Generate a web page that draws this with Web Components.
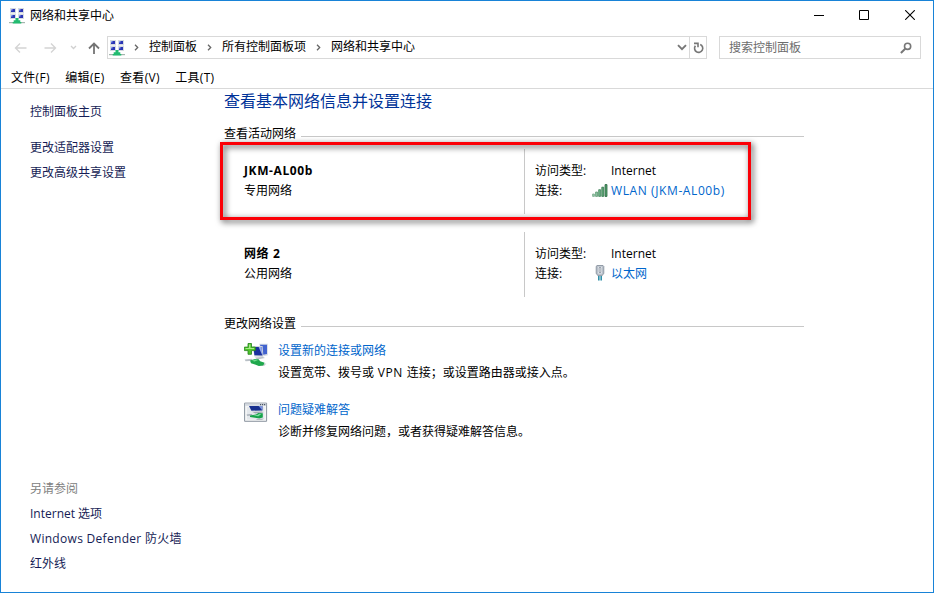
<!DOCTYPE html>
<html lang="zh-CN">
<head>
<meta charset="utf-8">
<title>网络和共享中心</title>
<style>
  body {
    margin: 0;
    font: 12px/20px "Open Sans", "Noto Sans CJK SC", sans-serif;
    color: #000;
    background: #fff;
  }
  .wide { letter-spacing: .3px; }
</style>
</head>
<body>
<app-window>
  <title-bar>网络和共享中心</title-bar>
  <nav-bar search="搜索控制面板">
    <path-part>控制面板</path-part>
    <path-part>所有控制面板项</path-part>
    <path-part>网络和共享中心</path-part>
  </nav-bar>
  <menu-bar>
    <span>文件(F)</span>
    <span>编辑(E)</span>
    <span>查看(V)</span>
    <span>工具(T)</span>
  </menu-bar>
  <side-nav slot="side">
    <nav-link slot="home">控制面板主页</nav-link>
    <nav-link>更改适配器设置</nav-link>
    <nav-link>更改高级共享设置</nav-link>
    <nav-link slot="also" muted>另请参阅</nav-link>
    <nav-link slot="also">Internet 选项</nav-link>
    <nav-link slot="also" class="wide">Windows Defender 防火墙</nav-link>
    <nav-link slot="also">红外线</nav-link>
  </side-nav>
  <main-panel slot="main" heading="查看基本网络信息并设置连接">
    <panel-section label="查看活动网络">
      <network-row name="JKM-AL00b" type="专用网络" icon="signal" link="WLAN (JKM-AL00b)" highlight></network-row>
      <network-row name="网络 2" type="公用网络" icon="cable" link="以太网"></network-row>
    </panel-section>
    <panel-section label="更改网络设置">
      <task-item icon="connect" label="设置新的连接或网络">设置宽带、拨号或<span style="letter-spacing:.6px"> VPN </span>连接；或设置路由器或接入点。</task-item>
      <task-item icon="repair" label="问题疑难解答">诊断并修复网络问题，或者获得疑难解答信息。</task-item>
    </panel-section>
  </main-panel>
</app-window>

<script>
  const ICONS = {
    network: [16, 16, `
      <path fill="#d5dae0" d="M1 0h6v5.5H1zM9 0h6v5.5H9zM1 6h6v5H1zM9 6h6v5H9z"/>
      <path fill="#2a35b4" d="M2 1h4v3H2zM10 1h4v3h-4zM2 7h4v3H2zM10 7h4v3h-4z"/>
      <path fill="#8ea5f0" d="M2 1h1.5v1.5H2zM10 1h1.5v1.5H10zM2 7h1.5v1.5H2zM10 7h1.5v1.5H10z"/>
      <path fill="#a3b5ad" d="M0 14h16v1.2H0z"/>
      <path fill="#22bb70" d="M6.5 10h3v2.2h1.8V14h1v1.6H3.7V14h1v-1.8h1.8z"/>`],
    back: [13, 12, `<path d="M12.5 6H1.5M6 1.5L1.5 6L6 10.5" fill="none" stroke="#d4d4d4" stroke-width="1.4"/>`],
    forward: [13, 12, `<path d="M.5 6h11M7 1.5L11.5 6L7 10.5" fill="none" stroke="#d4d4d4" stroke-width="1.4"/>`],
    recent: [7, 5, `<path d="M1 1l2.5 2.5L6 1" fill="none" stroke="#d0d0d0" stroke-width="1.3"/>`],
    up: [12, 12, `<path d="M6 12V1.5M1 6.5l5-5 5 5" fill="none" stroke="#747474" stroke-width="1.8"/>`],
    sep: [5, 7, `<path d="M1 .8l2.7 2.7L1 6.2" fill="none" stroke="#666" stroke-width="1.3"/>`],
    drop: [10, 7, `<path d="M1 1.2l4 4 4-4" fill="none" stroke="#777" stroke-width="1.9"/>`],
    refresh: [11, 12, `<path d="M7.2 2.5A4.1 4.1 0 1 1 2.4 3.8M1 1.4h4v3.9" fill="none" stroke="#777" stroke-width="1.6"/>`],
    search: [12, 12, `<circle cx="7.6" cy="4.3" r="3.1" fill="none" stroke="#777" stroke-width="1.6"/><path d="M5.2 6.8L.9 11" stroke="#777" stroke-width="2"/>`],
    min: [10, 10, `<path d="M0 5.5h10" stroke="#000"/>`],
    max: [10, 10, `<path d="M.5.5h9v9h-9z" fill="none" stroke="#000"/>`],
    close: [10, 10, `<path d="M.2.2l9.6 9.6M9.8.2L.2 9.8" stroke="#000" stroke-width="1.1"/>`],
    signal: [16, 13, `
      <g stroke-width=".8">
        <path fill="#9acbae" stroke="#7aab8c" d="M.6 10h1.8v2.4H.6z"/>
        <path fill="#8bc5a0" stroke="#5e9873" d="M3.6 8h1.9v4.4H3.6z"/>
        <path fill="#6db587" stroke="#408359" d="M6.7 5.7h1.9v6.7H6.7z"/>
        <path fill="#65ab7c" stroke="#30754a" d="M9.8 3.2h1.9v9.2H9.8z"/>
        <path fill="#58a272" stroke="#26663e" d="M13 .6h2v11.8h-2z"/>
      </g>`],
    cable: [10, 16, `
      <path fill="#b9c1cb" stroke="#808a97" stroke-width=".8" d="M2 .5h6l.8.8v7L7.2 10.6H2.8L1.2 8.3v-7z"/>
      <path fill="#eef1f5" d="M3 1.8h4v6.6H3z"/>
      <path fill="none" stroke="#8d96a3" stroke-width=".9" d="M4.1 2.5h1.8v5H4.1z"/>
      <path fill="#2e8fa9" d="M3 11h1.6v4.5H3zM5.4 11H7v4.5H5.4z"/>`],
    connect: [24, 24, `
      <path fill="#d8dde3" d="M15 .8h8.8v11.4l-4 1z"/>
      <path fill="#4263cf" d="M16 1.8h7v9.2l-4 .8z"/>
      <path fill="#cfd5dc" d="M8.4 3h10.2l.8 11-9-.6z"/>
      <path fill="#1a309e" d="M9.4 4h8.2l.8 8.6-8-.4z"/>
      <path fill="#93a9ee" d="M14.6 4h3l.8 8.6z"/>
      <path fill="#b9c0c6" d="M11 14.4l8-.4 2 1-8 1.6zM.6 16.6l7-.8 1.4 2-7.4.4z"/>
      <path fill="#c6cbd0" d="M15 21l7.4-.4-2 2.2-5.4.2z"/>
      <path fill="#1fa84c" d="M6 17.6l5-1.6 3.6.2 1.6 2 4.4 1.6-1.4 2.6-4.4.6-3.8-1.6-4-1.2z"/>
      <path fill="#6fdc8d" d="M8 17.8l4-1.2 2 .4-3.4 1.6z"/>
      <path fill="#4fc52c" stroke="#25811c" stroke-width=".8" d="M4 .5h3.5v3.6h3.8v3.5H7.5v3.7H4V7.6H.4V4.1H4z"/>
      <path fill="#a7ec87" d="M5 1.4h1.4v3.7h3.8v1H1.5v-1H5z"/>`],
    repair: [24, 20, `
      <path fill="#f4f5f6" stroke="#8b949f" d="M.6 1.1h22v18.2H.6z"/>
      <path fill="#d1d7df" d="M1.1 1.6h21v2.2h-21z"/>
      <path fill="#4c5664" d="M16 2h1.2v1.2H16zM18 2h1.2v1.2H18zM20 2h1.2v1.2H20z"/>
      <path fill="#e4e8ec" d="M3 5h17.4v12.6H3z"/>
      <path fill="#18308f" d="M5 4.1h13.4v4.3l-11 .3z"/>
      <path fill="#7d95dd" d="M14.6 4.1h3.8v4.3z"/>
      <path fill="#a3abb4" d="M8 9.8l10-.4 1.4 1-8 1zM2.6 12.4l5-.4 1.4 1.4-6 .4z"/>
      <path fill="#17a34b" d="M6 13.4l6-.8 2.4-1.6 4.4.2v4.2l-3.4 1.2-4.4-.8-5-.8z"/>
      <path fill="#7adda0" d="M9 13.6l4.4-.6 2-1.2 2 .2-3 2.2z"/>
      <path fill="#b4bbc3" d="M12 17l8-.4-2 1.4h-5z"/>`]
  };

  // registers an element whose shadow root is built by render(host)
  function define(tag, render) {
    customElements.define(tag, class extends HTMLElement {
      connectedCallback() {
        if (this.shadowRoot) return;
        this.attachShadow({ mode: 'open' });
        this.shadowRoot.innerHTML = render(this);
      }
    });
  }

  define('ui-icon', el => {
    const [w, h, shape] = ICONS[el.getAttribute('name')];
    return `
      <style>
        :host { display: inline-block; flex: none; width: ${w}px; height: ${h}px; }
        svg { display: block; }
      </style>
      <svg width="${w}" height="${h}" viewBox="0 0 ${w} ${h}">${shape}</svg>`;
  });

  define('app-window', () => `
    <style>
      :host {
        display: flex;
        flex-direction: column;
        box-sizing: border-box;
        width: 934px;
        height: 593px;
        border: 1px solid #1883d7;
        background: #fff;
        overflow: hidden;
      }
      .body { display: flex; flex: 1; }
    </style>
    <slot></slot>
    <div class="body">
      <slot name="side"></slot>
      <slot name="main"></slot>
    </div>`);

  define('title-bar', () => `
    <style>
      :host { display: flex; align-items: center; height: 29px; padding: 0 18px 0 8px; }
      .title { margin-left: 5px; flex: 1; }
      .buttons { display: flex; gap: 36px; padding-bottom: 1px; }
      .buttons ui-icon:first-child { margin-right: -1px; }
    </style>
    <ui-icon name="network"></ui-icon>
    <span class="title"><slot></slot></span>
    <div class="buttons">
      <ui-icon name="min"></ui-icon>
      <ui-icon name="max"></ui-icon>
      <ui-icon name="close"></ui-icon>
    </div>`);

  define('nav-bar', el => `
    <style>
      :host { display: flex; align-items: center; height: 23px; padding: 6px 12px 0 13px; }
      .arrows { display: flex; align-items: center; width: 93px; }
      .arrows ui-icon:nth-child(2) { margin-left: 17px; }
      .arrows ui-icon:nth-child(3) { margin-left: 13px; }
      .arrows ui-icon:nth-child(4) { margin-left: 11px; }
      .box {
        display: flex;
        align-items: center;
        box-sizing: border-box;
        height: 23px;
        border: 1px solid #d9d9d9;
      }
      .address { width: 600px; padding-left: 1px; }
      .end { display: flex; align-items: center; margin-left: auto; height: 21px; }
      .refresh {
        display: flex;
        align-items: center;
        justify-content: center;
        width: 16px;
        height: 21px;
        margin-left: 2px;
        border-left: 1px solid #d9d9d9;
      }
      .search { width: 202px; margin-left: 12px; padding: 0 8px 0 9px; justify-content: space-between; color: #6d6d6d; }
    </style>
    <div class="arrows">
      <ui-icon name="back"></ui-icon>
      <ui-icon name="forward"></ui-icon>
      <ui-icon name="recent"></ui-icon>
      <ui-icon name="up"></ui-icon>
    </div>
    <div class="box address">
      <ui-icon name="network"></ui-icon>
      <slot></slot>
      <div class="end">
        <ui-icon name="drop"></ui-icon>
        <span class="refresh"><ui-icon name="refresh"></ui-icon></span>
      </div>
    </div>
    <div class="box search">
      <span>${el.getAttribute('search')}</span>
      <ui-icon name="search"></ui-icon>
    </div>`);

  define('path-part', () => `
    <style>
      :host { display: flex; align-items: center; }
      ui-icon { margin: 0 10px 0 9px; }
      span { margin-top: -1px; margin-right: 1px; }
    </style>
    <ui-icon name="sep"></ui-icon><span><slot></slot></span>`);

  define('menu-bar', () => `
    <style>
      :host {
        display: flex;
        box-sizing: border-box;
        height: 30px;
        padding: 9px 0 0 10px;
        gap: 15.5px;
        border-bottom: 1px solid #d9d9d9;
        letter-spacing: .3px;
      }
    </style>
    <slot></slot>`);

  define('side-nav', () => `
    <style>
      :host {
        display: flex;
        flex-direction: column;
        box-sizing: border-box;
        width: 223px;
        padding: 10px 0 16px 29px;
      }
      .home { margin-bottom: 11px; }
      .also { margin-top: auto; }
    </style>
    <div class="home"><slot name="home"></slot></div>
    <slot></slot>
    <div class="also"><slot name="also"></slot></div>`);

  define('nav-link', () => `
    <style>
      :host { display: block; line-height: 25px; color: #151c55; white-space: nowrap; }
      :host([muted]) { color: #808080; }
    </style>
    <slot></slot>`);

  define('main-panel', el => `
    <style>
      :host { display: block; width: 580px; }
      h1 { margin: 0 0 11px; font-size: 16px; line-height: 24px; font-weight: normal; color: #003399; }
    </style>
    <h1>${el.getAttribute('heading')}</h1>
    <slot></slot>`);

  define('panel-section', el => `
    <style>
      :host { display: block; }
      .label { display: flex; gap: 5px; height: 20px; }
      .label::after { content: ""; flex: 1; height: 1px; margin-top: 12px; background: #c8c8c8; }
    </style>
    <div class="label">${el.getAttribute('label')}</div>
    <slot></slot>`);

  define('network-row', el => `
    <style>
      :host { display: flex; position: relative; height: 65px; margin: 5px 0 18px; }
      :host(:last-child) { margin-bottom: 17px; }
      .name { box-sizing: border-box; width: 300px; padding: 12px 0 0 20px; }
      b { letter-spacing: .6px; }
      .info {
        display: grid;
        grid-template-columns: 56px 20px auto;
        grid-auto-rows: 20px;
        align-content: start;
        padding: 12px 0 0 10px;
        border-left: 1px solid #c8c8c8;
      }
      .value { grid-column: 3; }
      a { color: #0066cc; white-space: nowrap; letter-spacing: ${el.getAttribute('icon') === 'signal' ? '.6px' : 'normal'}; }
      ui-icon { align-self: center; justify-self: center; margin-left: -2px; margin-bottom: 2px; }
      /* callout drawn over the row, its shadow falls on both sides of the line */
      .frame {
        position: absolute;
        left: -4px;
        top: -7px;
        width: 525px;
        height: 72px;
        border: 3px solid #fb0007;
        filter: drop-shadow(2px 2px 3px rgba(0, 0, 0, .75));
      }
    </style>
    <div class="name">
      <b>${el.getAttribute('name')}</b><br>${el.getAttribute('type')}
    </div>
    <div class="info">
      <span>访问类型:</span><span class="value">Internet</span>
      <span>连接:</span><ui-icon name="${el.getAttribute('icon')}"></ui-icon><a>${el.getAttribute('link')}</a>
    </div>
    ${el.hasAttribute('highlight') ? '<div class="frame"></div>' : ''}`);

  define('task-item', el => `
    <style>
      :host { display: flex; gap: 10px; margin: 7px 0 17px; padding-left: 20px; }
      ui-icon { margin-top: 2px; }
      a { display: block; margin-bottom: 2px; color: #0066cc; }
    </style>
    <ui-icon name="${el.getAttribute('icon')}"></ui-icon>
    <div><a>${el.getAttribute('label')}</a><slot></slot></div>`);
</script>
</body>
</html>
